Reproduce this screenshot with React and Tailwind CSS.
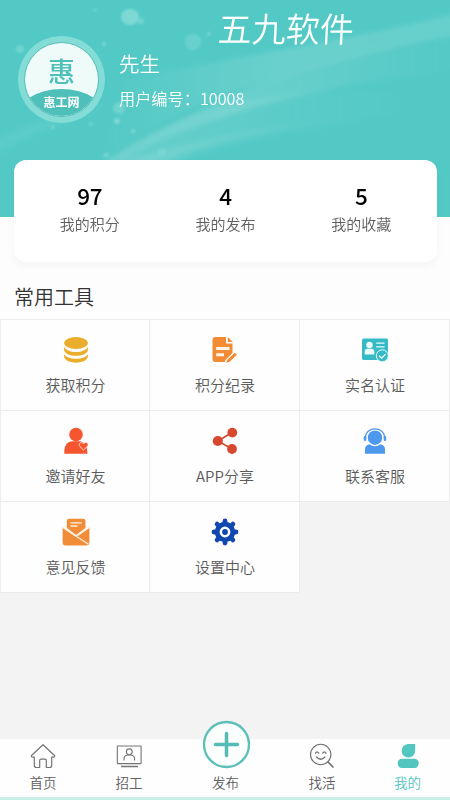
import React from 'react';

const HeaderArt = () => (
  <svg className="absolute inset-0 h-full w-full" viewBox="0 0 450 217" preserveAspectRatio="none" aria-hidden="true">
    <defs>
      <linearGradient id="beam" x1="0" y1="0" x2="1" y2="0">
        <stop offset="0" stopColor="#fff" stopOpacity="0" />
        <stop offset="0.5" stopColor="#fff" stopOpacity="0.13" />
        <stop offset="1" stopColor="#fff" stopOpacity="0.12" />
      </linearGradient>
      <linearGradient id="fade" x1="0" y1="0" x2="1" y2="0">
        <stop offset="0" stopColor="#fff" stopOpacity="0.06" />
        <stop offset="0.4" stopColor="#fff" stopOpacity="0.14" />
        <stop offset="1" stopColor="#fff" stopOpacity="0" />
      </linearGradient>
      <linearGradient id="glow" x1="0" y1="0" x2="1" y2="0">
        <stop offset="0" stopColor="#fff" stopOpacity="0.1" />
        <stop offset="0.4" stopColor="#fff" stopOpacity="0.08" />
        <stop offset="1" stopColor="#fff" stopOpacity="0" />
      </linearGradient>
      <filter id="soft" x="-20%" y="-20%" width="140%" height="140%">
        <feGaussianBlur stdDeviation="2.2" />
      </filter>
      <filter id="dot" x="-50%" y="-50%" width="200%" height="200%">
        <feGaussianBlur stdDeviation="1" />
      </filter>
    </defs>
    <g filter="url(#soft)">
      <path d="M130 80C240 55 340 42 455 14V36C370 50 300 72 240 90C190 105 140 135 100 160Z" fill="url(#beam)" />
      <path d="M100 165C220 88 330 55 455 36V68C400 76 350 84 300 96C220 115 150 140 110 170Z" fill="url(#fade)" />
      <path d="M100 165C170 115 230 100 310 92C380 88 420 98 400 112C310 122 200 138 150 168Z" fill="url(#glow)" />
      <path d="M120 162C200 138 280 122 380 116C300 132 220 140 170 165Z" fill="url(#glow)" />
      <path d="M-5 140C30 122 70 112 105 105C70 122 30 132 -5 155Z" fill="#fff" fillOpacity="0.05" />
    </g>
    <g fill="#c4f5ef" filter="url(#dot)">
      <ellipse cx="130" cy="17" rx="9" ry="8" opacity="0.38" />
      <circle cx="141" cy="21" r="3" opacity="0.28" />
      <circle cx="193" cy="42" r="8" opacity="0.2" />
      <circle cx="209" cy="34" r="2" opacity="0.3" />
      <circle cx="20" cy="49" r="4" opacity="0.24" />
      <circle cx="104" cy="44" r="2" opacity="0.35" />
      <circle cx="119" cy="108" r="6" opacity="0.25" />
      <circle cx="117" cy="121" r="3" opacity="0.35" />
      <circle cx="133" cy="131" r="2" opacity="0.35" />
      <circle cx="91" cy="124" r="2" opacity="0.25" />
      <circle cx="53" cy="127" r="2" opacity="0.3" />
      <circle cx="106" cy="155" r="2.5" opacity="0.3" />
      <circle cx="162" cy="152" r="4" opacity="0.15" />
      <circle cx="95" cy="10" r="2" opacity="0.18" />
    </g>
  </svg>
);

const Avatar = () => (
  <div className="grid h-[87px] w-[87px] shrink-0 place-items-center rounded-full bg-[#84dcd7]">
    <div className="relative flex h-[75px] w-[75px] flex-col items-center overflow-hidden rounded-full border border-[#55bbb6] bg-[#effbf9] text-[#4fbfba]">
      <div className="absolute -left-[9px] top-[46px] h-[60px] w-[91px] rounded-[50%] bg-[#4fbfba]" />
      <span className="relative mt-[13px] text-[27px] font-medium leading-[30px]">惠</span>
      <span className="relative mt-[8px] text-[12px] font-bold leading-[16px] text-white">惠工网</span>
    </div>
  </div>
);

const Coins = () => (
  <svg width="28" height="28" viewBox="0 0 28 28" fill="#eaae2c">
    <ellipse cx="14" cy="7" rx="11.8" ry="6" />
    <path d="M2.2 10.3C4 18 24 18 25.8 10.3V14.4C24 21.5 4 21.5 2.2 14.4Z" />
    <path d="M2.2 17.4C4 24.5 24 24.5 25.8 17.4V21C24 28.5 4 28.5 2.2 21Z" />
  </svg>
);

const Note = () => (
  <svg width="28" height="28" viewBox="0 0 28 28" fill="#f18c35">
    <path d="M4.5 1H15V7.5H21.5V17L14 24.5V26H4.5Q1.5 26 1.5 23V4Q1.5 1 4.5 1Z" />
    <path d="M16.8 1L21.8 6H16.8Z" />
    <path d="M5.2 11H18.5V14H5.2ZM5.2 17.3H13V20.2H5.2Z" fill="#fff4e9" />
    <path d="M23.7 16.3L26.5 18.8L18.5 26.3L14.7 27.4L15.8 23.7Z" stroke="#fff" strokeWidth="0.9" />
  </svg>
);

const IdCard = () => (
  <svg width="28" height="28" viewBox="0 0 28 28">
    <rect x="1" y="2.5" width="26" height="21.5" rx="1.8" fill="#36bac6" />
    <g fill="#effcfc">
      <circle cx="8.5" cy="9" r="3.2" />
      <path d="M3.7 18.5V16Q3.7 12.7 7 12.7H10Q13.3 12.7 13.3 16V18.5Z" />
    </g>
    <path d="M15.2 7.2H23.5M15.2 10.8H23.5" stroke="#e8fbfb" strokeWidth="1.2" />
    <circle cx="21.3" cy="19.8" r="6" fill="#36bac6" stroke="#e7fbfc" strokeWidth="1" />
    <path d="M18 19.7L20.6 22.2L24.6 18.1" fill="none" stroke="#fff" strokeWidth="1.3" />
  </svg>
);

const Friend = () => (
  <svg width="28" height="28" viewBox="0 0 28 28" fill="#f5562f">
    <circle cx="14" cy="7.5" r="6.8" />
    <path d="M2.3 26.8V23.5Q3.2 14.5 10 14.2H18.5Q25.5 16 25.5 26.8Z" />
    <path d="M21.5 23L17.8 19.4C15.5 16.6 19.8 13.8 21.5 16.8C23.3 13.8 28 16.6 25.4 19.4Z" stroke="#ffe3da" strokeWidth="0.9" />
  </svg>
);

const Share = () => (
  <svg width="28" height="28" viewBox="0 0 28 28" fill="#d8472f">
    <path d="M21 5.5L7 14L21 22" fill="none" stroke="#d8472f" strokeWidth="1.6" />
    <circle cx="6.8" cy="14" r="5.1" />
    <circle cx="21.3" cy="5.6" r="4.9" />
    <circle cx="21" cy="22" r="4.9" />
  </svg>
);

const Service = () => (
  <svg width="28" height="28" viewBox="0 0 28 28" fill="#4e98ed">
    <circle cx="14" cy="10.7" r="7.2" />
    <path d="M4.5 11C3.8-1.2 24.2-1.2 23.5 11" fill="none" stroke="#4e98ed" strokeWidth="1.3" />
    <rect x="2.8" y="9" width="2.5" height="5" rx="1.2" />
    <rect x="22.7" y="9" width="2.5" height="5" rx="1.2" />
    <path d="M4 26.8V22.3Q4 18.1 8.5 17.2Q14 21.2 19.5 17.2Q24 18.1 24 22.3V26.8Z" />
  </svg>
);

const Feedback = () => (
  <svg width="28" height="28" viewBox="0 0 28 28" fill="#f18d38">
    <path d="M4.8 10V3Q4.8 .8 7 .8H21Q23.5 .8 23.5 3V10L14 17Z" />
    <path d="M.6 9.5L13.5 18.4L27.4 9.5V25Q27.4 27.4 25 27.4H3Q.6 27.4 .6 25Z" />
    <path d="M.8 9.5L26.5 26.2M27.2 9.5L15.3 17.7" fill="none" stroke="#fff0e2" strokeWidth="1.3" />
    <path d="M8.5 4.8H19.8M8.5 8H15.5" stroke="#fff0e2" strokeWidth="1.3" />
  </svg>
);

const Gear = () => (
  <svg width="28" height="28" viewBox="0 0 28 28" fill="#1048b0">
    <circle cx="14" cy="14" r="7.8" fill="none" stroke="#1048b0" strokeWidth="4.8" />
    <g stroke="#1048b0" strokeWidth="4.8" strokeLinecap="round">
      <path d="M14 3V5M14 23V25M3 14H5M23 14H25M6.1 6.1L7.6 7.6M20.4 20.4L21.9 21.9M21.9 6.1L20.4 7.6M6.1 21.9L7.6 20.4" />
    </g>
    <circle cx="14" cy="14" r="2.9" />
  </svg>
);

const Home = () => (
  <svg width="28" height="28" viewBox="0 0 28 28" fill="none" stroke="#747474" strokeWidth="1.2" strokeLinejoin="round">
    <path d="M14 2.7L2.5 13.5Q2 15.2 3.6 15.2H5.3V23.2Q5.3 25.5 7.6 25.5H10.7V18.4Q10.7 17.2 12 17.2H16Q17.3 17.2 17.3 18.4V25.5H20.4Q22.7 25.5 22.7 23.2V15.2H24.5Q26 15.2 25.5 13.5Z" />
  </svg>
);

const Hire = () => (
  <svg width="28" height="28" viewBox="0 0 28 28" fill="none" stroke="#747474" strokeWidth="1.1">
    <rect x="2.3" y="4" width="23.8" height="17.6" rx=".5" />
    <circle cx="14.3" cy="9.8" r="2.9" />
    <path d="M9 18.5V17Q9 13.5 12.5 13H16Q19.6 13.5 19.6 17V18.5" />
    <path d="M6 24.5H23" strokeWidth="1.5" />
  </svg>
);

const Search = () => (
  <svg width="28" height="28" viewBox="0 0 28 28" fill="none" stroke="#707070" strokeWidth="1.1" strokeLinecap="round">
    <circle cx="12.7" cy="12.5" r="10.2" />
    <path d="M20 20L25 25" strokeWidth="1.7" />
    <path d="M7.5 11.1Q9.1 8.5 10.7 11.1M14.7 11.1Q16.3 8.5 17.9 11.1M8.5 15Q12.7 19.5 16.9 15" strokeWidth="1.3" />
  </svg>
);

const Mine = () => (
  <svg width="28" height="28" viewBox="0 0 28 28" fill="#53c6c0">
    <path d="M21.2 2V8.7A6.8 6.8 0 1 1 14 2Z" />
    <rect x="3.7" y="16.8" width="21" height="9.2" rx="4.2" />
  </svg>
);

const stats = [
  ['97', '我的积分'],
  ['4', '我的发布'],
  ['5', '我的收藏'],
];

const tools = [
  [Coins, '获取积分'],
  [Note, '积分纪录'],
  [IdCard, '实名认证'],
  [Friend, '邀请好友'],
  [Share, 'APP分享'],
  [Service, '联系客服'],
  [Feedback, '意见反馈'],
  [Gear, '设置中心'],
];

const Tab = ({ icon: Icon, label, active }) => (
  <div className={`flex flex-col items-center ${active ? 'text-[#53c6c0]' : 'text-[#606060]'}`}>
    <Icon />
    <span className="mt-[2px] text-[13.5px] leading-5">{label}</span>
  </div>
);

export default function App() {
  return (
    <div className="flex h-[800px] w-[450px] flex-col overflow-hidden bg-[#f3f3f3] font-['Noto_Sans_CJK_SC',sans-serif] font-[350]">
      <div className="h-[319px] shrink-0 bg-[#fdfdfd]">
        <header className="relative h-[217px] bg-[#53c9c5] text-white">
          <HeaderArt />
          <div className="relative flex h-[160px] pl-[18px]">
            <div className="pt-[36px]">
              <Avatar />
            </div>
            <div className="ml-[14px] pt-[48px]">
              <div className="text-[20.5px] leading-[30px]">先生</div>
              <div className="mt-[8px] whitespace-nowrap text-[16.2px] leading-6">用户编号：10008</div>
            </div>
          </div>
          <div className="absolute left-[218px] top-[6px] -skew-x-3 whitespace-nowrap text-[34px] leading-[44px]">五九软件</div>
          <section className="relative ml-[14px] grid h-[102px] w-[423px] grid-cols-3 rounded-[12px] bg-white px-[8px] pt-[21px] shadow-[0_4px_9px_rgba(0,0,0,0.035)]">
            {stats.map(([value, label]) => (
              <div key={label} className="flex flex-col items-center">
                <span className="text-[22.5px] font-medium leading-7 tracking-[-0.3px] text-black">{value}</span>
                <span className="mt-[4px] text-[15px] leading-[22px] text-[#606060]">{label}</span>
              </div>
            ))}
          </section>
        </header>
        <h2 className="pl-[14px] pt-[65px] text-[20px] leading-[30px] text-[#333333]">常用工具</h2>
      </div>

      <main className="grid shrink-0 grid-cols-[149px_150px_150px] grid-rows-[91px_91px_91px] border-l border-t border-[#ededed]">
        {tools.map(([Icon, label]) => (
          <div key={label} className="flex flex-col items-center border-b border-r border-[#ececec] bg-[#fefefe] pl-px pt-4">
            <Icon />
            <span className="mt-[10px] text-[15px] leading-[22px] text-[#5a5a5a]">{label}</span>
          </div>
        ))}
      </main>

      <nav className="mt-auto grid h-[61px] shrink-0 grid-cols-[86px_86px_107px_86px_85px] border-b-[3px] border-[#c9efe8] bg-[#fefefe] pt-[3px]">
        <Tab icon={Home} label="首页" />
        <Tab icon={Hire} label="招工" />
        <div className="-mt-[22px] flex flex-col items-center text-[#606060]">
          <svg width="50" height="50" viewBox="0 0 50 50">
            <circle cx="25.5" cy="24.5" r="22.5" fill="#fafefd" stroke="#5cbfb8" strokeWidth="2.3" />
            <path d="M25.5 13.5V35.5M14.5 24.5H36.5" stroke="#55bbb4" strokeWidth="3.5" strokeLinecap="round" />
          </svg>
          <span className="mt-[2px] text-[13.5px] leading-5">发布</span>
        </div>
        <Tab icon={Search} label="找活" />
        <Tab icon={Mine} label="我的" active />
      </nav>
    </div>
  );
}
